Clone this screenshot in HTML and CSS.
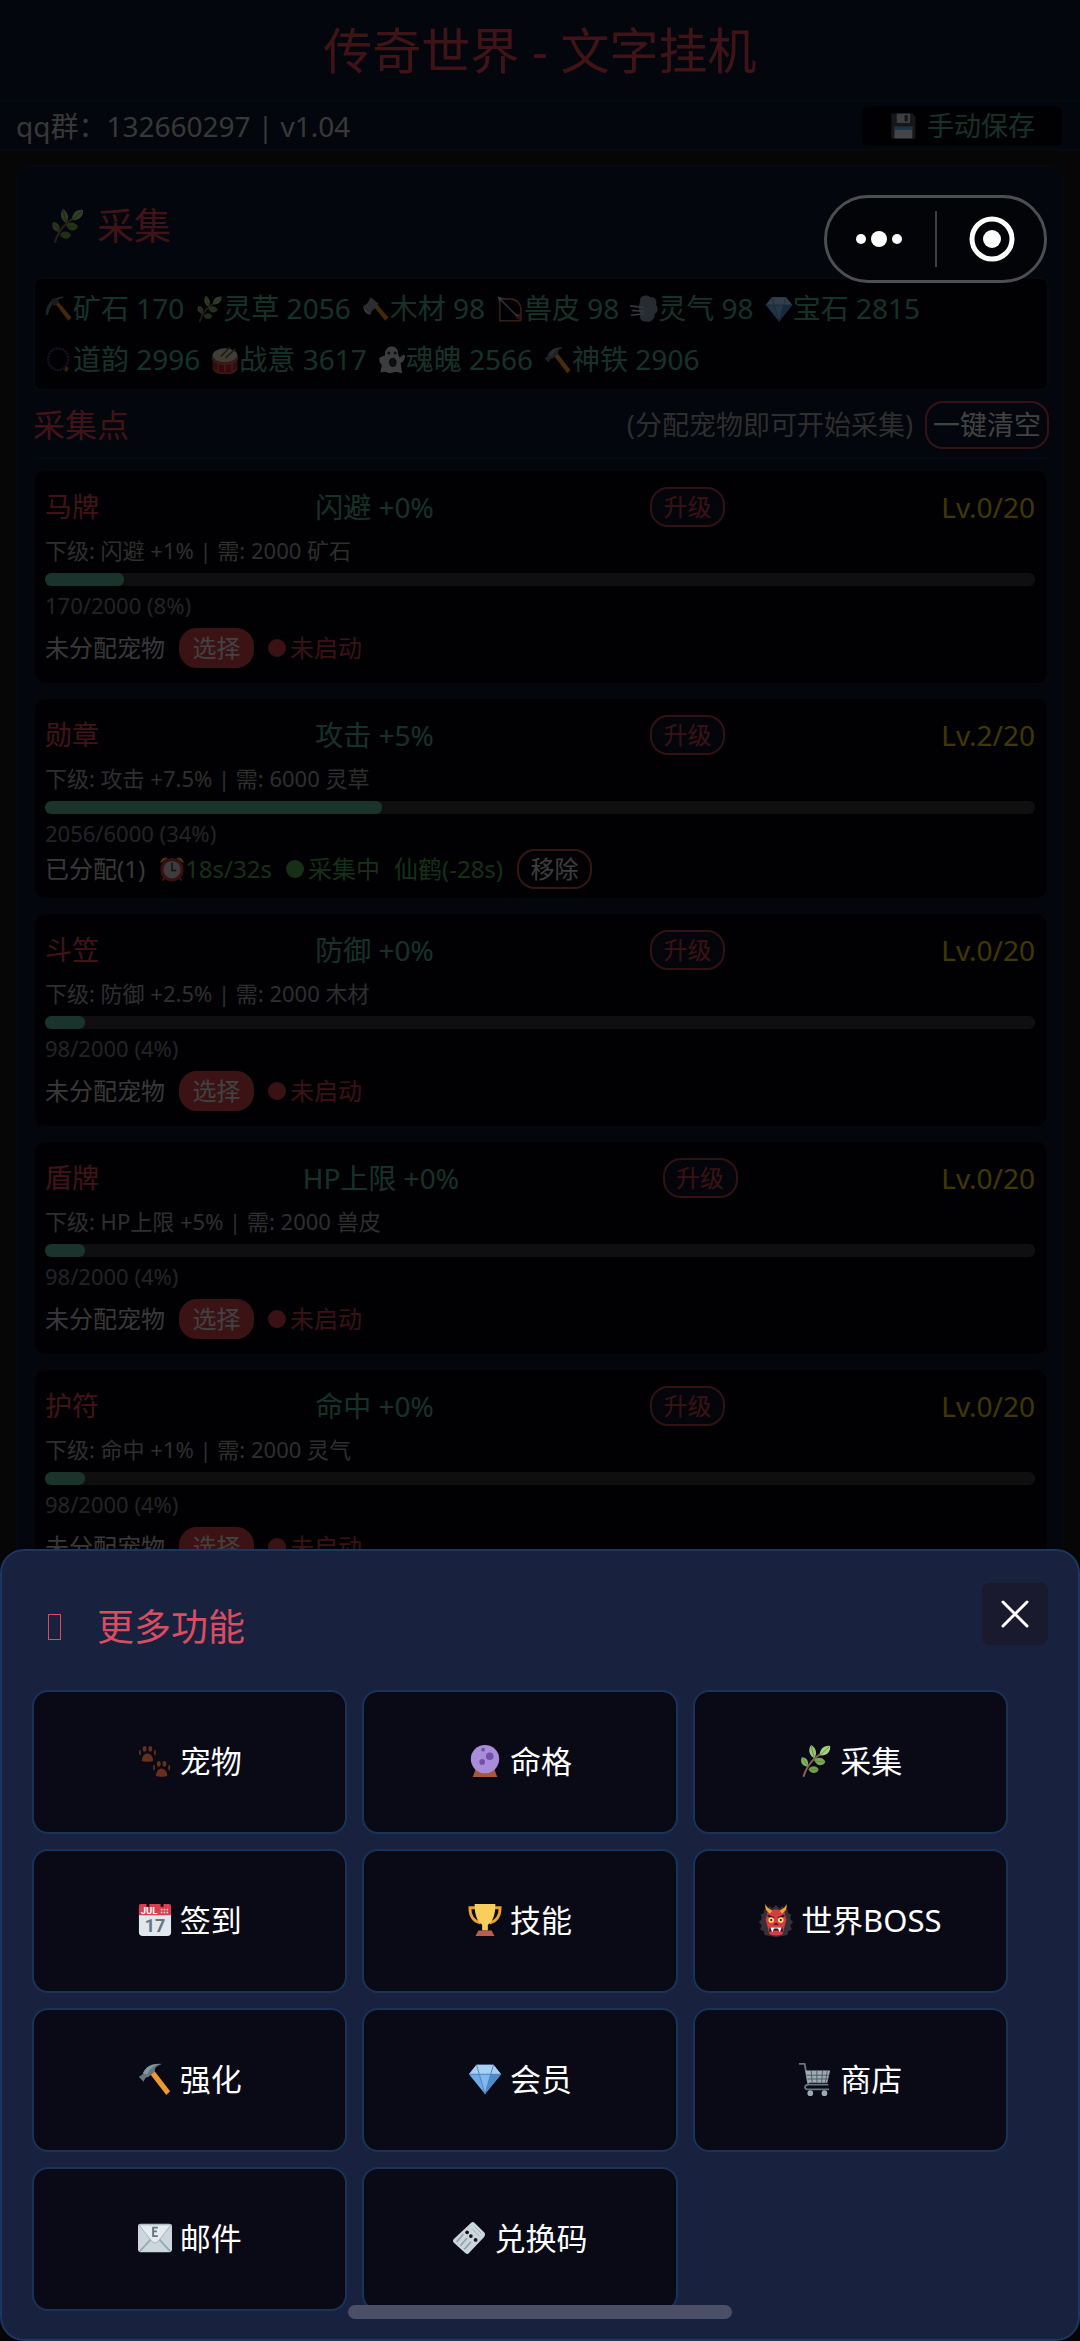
FILE: index.html
```html
<!DOCTYPE html>
<html lang="zh-CN">
<head>
<meta charset="utf-8">
<meta name="viewport" content="width=device-width, initial-scale=1">
<title>传奇世界 - 文字挂机</title>
<link rel="stylesheet" href="styles.css">
</head>
<body>
<svg class="sprite" aria-hidden="true">
  <symbol id="herb" viewBox="0 0 36 36">
    <path d="M6 34C9 24 16 14 30 7" fill="none" stroke="#8a6250" stroke-width="2" stroke-linecap="round"/>
    <path d="M14 1c5 3 7 9 3 14-5-3-7-9-3-14z" fill="#9cc479"/>
    <path d="M34 2c1 6-4 11-11 10C23 5 28 1 34 2z" fill="#a9cf85"/>
    <path d="M4 14c5 0 8 4 6 10-6-1-8-5-6-10z" fill="#83b35f"/>
    <path d="M17 17c4-4 10-3 12 2-3 5-9 5-12-2z" fill="#7aa954"/>
    <path d="M11 27c3-5 9-4 11 0-2 5-8 5-11 0z" fill="#6f9f4b"/>
    <path d="M14 2l3 12M33 3L23 12M5 15l5 8M18 18l10 1M12 27l9 0" stroke="#5c913b" stroke-width="1" fill="none"/>
  </symbol>
  <symbol id="floppy" viewBox="0 0 36 36">
    <path d="M3 2h27l4 4v28H3z" fill="#4a4f57"/>
    <path d="M10 2h17v12H10z" fill="#cfd3d8"/>
    <path d="M20 4h4v8h-4z" fill="#444"/>
    <path d="M7 19h23v15H7z" fill="#e1e8ed"/>
    <path d="M7 19h23v4H7z" fill="#55acee"/>
  </symbol>
  <symbol id="pickaxe" viewBox="0 0 36 36">
    <path d="M11 8l3-3 20 24-4 4z" fill="#e58a1f"/>
    <path d="M1 26C1 12 8 3 24 2l-1 2C14 6 7 12 4 25z" fill="#66757f"/>
    <path d="M9 5l6-1 3 5-6 5-4-3z" fill="#55606a"/>
  </symbol>
  <symbol id="axe" viewBox="0 0 36 36">
    <path d="M12 11l4-3 18 21-4 4z" fill="#e58a1f"/>
    <path d="M2 14C8 12 9 7 11 3l10 8-4 6c-2 1-5 3-6 8C5 24 2 20 2 14z" fill="#8899a6"/>
    <path d="M2 14c0 6 3 10 9 11-5-3-7-6-9-11z" fill="#ccd6dd"/>
  </symbol>
  <symbol id="bow" viewBox="0 0 36 36">
    <path d="M5 5h14c9 1 13 8 13 13v15" fill="none" stroke="#c1694f" stroke-width="2"/>
    <path d="M5 5v28h27" fill="none" stroke="#a0705c" stroke-width="2"/>
    <path d="M3 3l25 25" stroke="#99aab5" stroke-width="2"/>
    <path d="M2 2l7 2-5 5zM24 25h7v7z" fill="#b0bec8"/><path d="M25 29l5-4 3 7z" fill="#dd2e44"/>
  </symbol>
  <symbol id="wind" viewBox="0 0 36 36">
    <path d="M13 9C11 1 22-2 26 3c6-1 10 5 7 9 4 4 3 10-1 12 0 8-7 12-12 10-6 1-9-6-6-9-3-4-3-12-1-16z" fill="#7f93a4"/>
    <path d="M1 14l16 2M3 20l14 1M2 26l15-2" stroke="#aebdca" stroke-width="2" stroke-linecap="round"/>
  </symbol>
  <symbol id="gem" viewBox="0 0 36 36">
    <path d="M9 3h18l8 10-17 21L1 13z" fill="#6fa9e6"/>
    <path d="M9 3h18l8 10H1z" fill="#a7d0f5"/>
    <path d="M12 13h12l-6 21z" fill="#82b8ed"/>
    <path d="M24 13h11L18 34z" fill="#4f8acb"/>
    <path d="M1 13h34M9 3l3 10 6 21 6-21 3-10" fill="none" stroke="#4d83bd" stroke-width="1"/>
  </symbol>
  <symbol id="beads" viewBox="0 0 36 36">
    <ellipse cx="17" cy="17" rx="13" ry="14" fill="none" stroke="#493468" stroke-width="3" stroke-dasharray="3 1"/>
    <path d="M26 26l5 2-3 5-3-1z" fill="#a06b32"/>
  </symbol>
  <symbol id="drum" viewBox="0 0 36 36">
    <path d="M2 13v15c4 9 28 9 32 0V13z" fill="#b92235"/>
    <path d="M9 19v13M18 21v13M27 19v13" stroke="#df5964" stroke-width="2"/>
    <ellipse cx="18" cy="12" rx="16" ry="9" fill="#d3cbc0"/>
    <path d="M1 12c1 12 33 12 34 0v4c-2 11-32 11-34 0zM2 27c5 10 27 10 32 0v3c-5 9-27 9-32 0z" fill="#b5653f"/>
    <path d="M13 13L24 2M19 15L31 4" stroke="#77583b" stroke-width="2" stroke-linecap="round"/>
  </symbol>
  <symbol id="ghost" viewBox="0 0 36 36">
    <path d="M9 12C8-3 27-3 26 11l2 4 5-4 2 2c-1 5-3 8-6 9l2 13-8-2-8 2-6-2-6 1 2-10c-3-2-4-5-3-9z" fill="#c3cad1"/>
    <circle cx="14" cy="9" r="2" fill="#292f33"/><circle cx="22" cy="9" r="2" fill="#292f33"/>
    <ellipse cx="19" cy="21" rx="5" ry="6" fill="#292f33"/>
  </symbol>
  <symbol id="hammer" viewBox="0 0 36 36">
    <path d="M13 13l4-4 17 22-4 4z" fill="#f0982c"/>
    <path d="M1 16c1-2 4-2 5-5 3-7 9-10 19-9-5 2-8 4-7 8l-7 6c-3 0-4 2-5 5z" fill="#66757f"/>
    <path d="M5 12c3-7 9-10 20-10-8 1-12 4-15 11z" fill="#8997a1"/>
  </symbol>
  <symbol id="clock" viewBox="0 0 36 36">
    <path d="M2 10c0-6 5-9 10-7zM34 10c0-6-5-9-10-7z" fill="#f6b64a"/>
    <path d="M8 29l-3 5M28 29l3 5" stroke="#d23b3e" stroke-width="3"/>
    <circle cx="18" cy="19" r="14" fill="#c8c8c8" stroke="#c8383a" stroke-width="4"/>
    <path d="M18 9v11h6" fill="none" stroke="#30363b" stroke-width="2"/>
  </symbol>
  <symbol id="paws" viewBox="0 0 36 36">
    <g id="paw" fill="#66301c">
      <path d="M4 18c0-5 3-8 6-8s6 3 6 8c-2 1-10 1-12 0z"/>
      <ellipse cx="2" cy="9" rx="1" ry="3"/><ellipse cx="7" cy="5" rx="2" ry="3"/><ellipse cx="13" cy="5" rx="2" ry="3"/><ellipse cx="18" cy="9" rx="1" ry="3"/>
    </g>
    <use href="#paw" x="15" y="16"/>
  </symbol>
  <symbol id="crystal" viewBox="0 0 36 36">
    <path d="M8 27h20l3 8H5z" fill="#a9563f"/>
    <circle cx="18" cy="16" r="15" fill="#aa8dd8"/>
    <circle cx="23" cy="13" r="4" fill="#7450a8"/><circle cx="15" cy="19" r="3" fill="#7450a8"/><circle cx="16" cy="6" r="2" fill="#7450a8"/>
  </symbol>
  <symbol id="trophy" viewBox="0 0 36 36">
    <path d="M9 5H2c0 9 3 14 11 16M27 5h7c0 9-3 14-11 16" fill="none" stroke="#eaa32f" stroke-width="3"/>
    <path d="M7 1h22c0 12-3 19-8 22v6h-6v-6C10 20 7 13 7 1z" fill="#fbcd5a"/>
    <path d="M11 29h14l3 6H8z" fill="#b5614d"/>
  </symbol>
  <symbol id="ogre" viewBox="0 0 36 36">
    <path d="M6 6l3 1 2-4 3 3 4-4 4 4 3-3 2 4 3-1 1 5 3 1-1 5 3 3-3 4 2 4-4 2-1 4-12 2-12-2-1-4-4-2 2-4-3-4 3-3-1-5 3-1z" fill="#373038"/>
    <path d="M9 10c5-4 13-4 18 0l2 8-2 7-2 8q-7 3-14 0l-2-8-2-7z" fill="#d63c43"/>
    <path d="M12 11C7 9 6 4 7 1c1 4 4 5 7 7zM24 11c5-2 6-7 5-10-1 4-4 5-7 7z" fill="#f3a62c"/>
    <path d="M9 13l7 3M27 13l-7 3" stroke="#30181c" stroke-width="2"/>
    <circle cx="13" cy="18" r="3" fill="#ffd66a"/><circle cx="23" cy="18" r="3" fill="#ffd66a"/><circle cx="13" cy="18" r="1"/><circle cx="23" cy="18" r="1"/>
    <path d="M15 23l3-2 3 2M11 26h14v5l-3-2h-8l-3 2z" fill="#2d1518"/><path d="M12 26l2 5 2-4h4l2 4 2-5z" fill="#fff"/>
  </symbol>
  <symbol id="cart" viewBox="0 0 36 36">
    <path d="M1 2h6l4 22h21M11 24c-4 0-5 5-1 5h23" fill="none" stroke="#66757f" stroke-width="2"/>
    <path d="M8 9h26l-3 13H10z" fill="#9eabb5"/>
    <path d="M9 14h24M10 18h22M14 9l1 13M20 9v13M26 9l-1 13M31 9l-2 13" stroke="#4e5963" stroke-width="1"/>
    <circle cx="13" cy="33" r="3" fill="#9baab5"/><circle cx="28" cy="33" r="3" fill="#9baab5"/>
  </symbol>
  <symbol id="mail" viewBox="0 0 36 36">
    <rect x="0" y="3" width="36" height="30" rx="3" fill="#ccd6dd"/>
    <path d="M2 32l12-13M34 32L22 19" stroke="#99aab5" stroke-width="2"/>
    <path d="M1 4h34L21 22q-3 3-6 0z" fill="#e5ebef" stroke="#a5b3bd" stroke-width="1"/>
    <path d="M21 7h-5v9h5M16 11h4" fill="none" stroke="#66757f" stroke-width="2"/>
  </symbol>
  <symbol id="ticket" viewBox="0 0 36 36">
    <path d="M20 2q2-2 4 0l10 10q2 2 0 5L18 34q-2 2-4 0L2 23q-2-2 0-4z" fill="#ccd6dd"/>
    <path d="M5 22l7-8M9 26l7-8M13 30l7-8" stroke="#97a6b1" stroke-width="2"/>
    <path d="M21 8l8 8M24 6l7 7" stroke="#a5b3bd" stroke-width="1"/>
    <g fill="#15151f"><circle cx="16" cy="12" r="2"/><circle cx="20" cy="16" r="2"/><circle cx="25" cy="20" r="2"/></g>
  </symbol>
</svg>

<div class="page">
  <header class="topbar"><h1>传奇世界 - 文字挂机</h1></header>
  <div class="infobar">
    <span>qq群：132660297 | v1.04</span>
    <button class="save" type="button"><svg class="emoji"><use href="#floppy"/></svg>手动保存</button>
  </div>

  <main class="panel">
    <h2 class="panel-title"><svg class="emoji"><use href="#herb"/></svg>采集</h2>

    <ul class="resources">
      <li><svg class="emoji"><use href="#pickaxe"/></svg>矿石 170</li>
      <li><svg class="emoji"><use href="#herb"/></svg>灵草 2056</li>
      <li><svg class="emoji"><use href="#axe"/></svg>木材 98</li>
      <li><svg class="emoji"><use href="#bow"/></svg>兽皮 98</li>
      <li><svg class="emoji"><use href="#wind"/></svg>灵气 98</li>
      <li><svg class="emoji"><use href="#gem"/></svg>宝石 2815</li>
      <li><svg class="emoji"><use href="#beads"/></svg>道韵 2996</li>
      <li><svg class="emoji"><use href="#drum"/></svg>战意 3617</li>
      <li><svg class="emoji"><use href="#ghost"/></svg>魂魄 2566</li>
      <li><svg class="emoji"><use href="#hammer"/></svg>神铁 2906</li>
    </ul>

    <div class="section-head">
      <h3>采集点</h3>
      <span class="hint">(分配宠物即可开始采集)</span>
      <button class="clear" type="button">一键清空</button>
    </div>

    <article class="card">
      <div class="card-head"><span class="name">马牌</span><span class="bonus">闪避 +0%</span><button class="pill outline" type="button">升级</button><span class="level">Lv.0/20</span></div>
      <p class="next">下级: 闪避 +1% | 需: 2000 矿石</p>
      <div class="track"><div class="fill" style="width:8%"></div></div>
      <p class="amount">170/2000 (8%)</p>
      <div class="actions"><span>未分配宠物</span><button class="pill solid" type="button">选择</button><span class="status off">未启动</span></div>
    </article>

    <article class="card assigned">
      <div class="card-head"><span class="name">勋章</span><span class="bonus">攻击 +5%</span><button class="pill outline" type="button">升级</button><span class="level">Lv.2/20</span></div>
      <p class="next">下级: 攻击 +7.5% | 需: 6000 灵草</p>
      <div class="track"><div class="fill" style="width:34%"></div></div>
      <p class="amount">2056/6000 (34%)</p>
      <div class="actions"><span>已分配(1)</span><span class="timer"><svg class="emoji"><use href="#clock"/></svg>18s/32s</span><span class="status on">采集中</span><span class="pet">仙鹤(-28s)</span><button class="pill remove" type="button">移除</button></div>
    </article>

    <article class="card">
      <div class="card-head"><span class="name">斗笠</span><span class="bonus">防御 +0%</span><button class="pill outline" type="button">升级</button><span class="level">Lv.0/20</span></div>
      <p class="next">下级: 防御 +2.5% | 需: 2000 木材</p>
      <div class="track"><div class="fill" style="width:4%"></div></div>
      <p class="amount">98/2000 (4%)</p>
      <div class="actions"><span>未分配宠物</span><button class="pill solid" type="button">选择</button><span class="status off">未启动</span></div>
    </article>

    <article class="card">
      <div class="card-head"><span class="name">盾牌</span><span class="bonus">HP上限 +0%</span><button class="pill outline" type="button">升级</button><span class="level">Lv.0/20</span></div>
      <p class="next">下级: HP上限 +5% | 需: 2000 兽皮</p>
      <div class="track"><div class="fill" style="width:4%"></div></div>
      <p class="amount">98/2000 (4%)</p>
      <div class="actions"><span>未分配宠物</span><button class="pill solid" type="button">选择</button><span class="status off">未启动</span></div>
    </article>

    <article class="card">
      <div class="card-head"><span class="name">护符</span><span class="bonus">命中 +0%</span><button class="pill outline" type="button">升级</button><span class="level">Lv.0/20</span></div>
      <p class="next">下级: 命中 +1% | 需: 2000 灵气</p>
      <div class="track"><div class="fill" style="width:4%"></div></div>
      <p class="amount">98/2000 (4%)</p>
      <div class="actions"><span>未分配宠物</span><button class="pill solid" type="button">选择</button><span class="status off">未启动</span></div>
    </article>
  </main>
</div>

<div class="scrim"></div>

<div class="capsule">
  <button type="button" aria-label="更多">
    <svg width="48" height="48" viewBox="0 0 48 48" fill="#fff"><circle cx="6" cy="24" r="5"/><circle cx="24" cy="24" r="8"/><circle cx="42" cy="24" r="5"/></svg>
  </button>
  <button type="button" aria-label="关闭小程序">
    <svg width="48" height="48" viewBox="0 0 48 48"><circle cx="24" cy="24" r="20" fill="none" stroke="#fff" stroke-width="5"/><circle cx="24" cy="24" r="9" fill="#fff"/></svg>
  </button>
</div>

<section class="sheet" role="dialog" aria-labelledby="more-title">
  <div class="sheet-head">
    <h2 id="more-title"><span class="missing"></span>更多功能</h2>
    <button class="close" type="button" aria-label="关闭"><svg width="28" height="28" viewBox="0 0 28 28"><path d="M2 2l24 24M26 2L2 26" stroke="#fff" stroke-width="3" stroke-linecap="round"/></svg></button>
  </div>
  <div class="menu">
    <button type="button"><svg class="emoji"><use href="#paws"/></svg>宠物</button>
    <button type="button"><svg class="emoji"><use href="#crystal"/></svg>命格</button>
    <button type="button"><svg class="emoji"><use href="#herb"/></svg>采集</button>
    <button type="button">
      <svg class="emoji" viewBox="0 0 36 36">
        <path d="M1 5h34v26q0 4-4 4H5q-4 0-4-4z" fill="#e1e8ed"/>
        <path d="M1 13V3q0-2 2-2h6v3h3V1h12v3h3V1h6q2 0 2 2v10z" fill="#d83f50"/>
        <g fill="#fff" opacity=".7"><circle cx="25" cy="7" r="1"/><circle cx="28" cy="7" r="1"/><circle cx="31" cy="7" r="1"/><circle cx="25" cy="10" r="1"/><circle cx="28" cy="10" r="1"/><circle cx="31" cy="10" r="1"/></g>
        <text x="3" y="12" class="cal-month">JUL</text>
        <text x="18" y="31" text-anchor="middle" class="cal-day">17</text>
      </svg>签到</button>
    <button type="button"><svg class="emoji"><use href="#trophy"/></svg>技能</button>
    <button type="button"><svg class="emoji"><use href="#ogre"/></svg>世界BOSS</button>
    <button type="button"><svg class="emoji"><use href="#hammer"/></svg>强化</button>
    <button type="button"><svg class="emoji"><use href="#gem"/></svg>会员</button>
    <button type="button"><svg class="emoji"><use href="#cart"/></svg>商店</button>
    <button type="button"><svg class="emoji"><use href="#mail"/></svg>邮件</button>
    <button type="button"><svg class="emoji"><use href="#ticket"/></svg>兑换码</button>
  </div>
</section>
<div class="home-indicator"></div>
</body>
</html>
```
FILE: styles.css
```css
:root {
  --red: #d8434f;
  --green: #4ca686;
  --line: #0e2036;
  --panel: #0a1528;
  --card: #06060f;
}

* { box-sizing: border-box; }

body {
  margin: 0;
  overflow: hidden;
  background: #000;
  font-family: "Noto Sans", "Noto Sans CJK SC", sans-serif;
  font-size: 28px;
  line-height: 40px;
}

h1, h2, h3, p, ul { margin: 0; padding: 0; font-weight: 400; }
ul { list-style: none; }

button {
  margin: 0;
  padding: 0;
  border: 0;
  background: none;
  color: inherit;
  font: inherit;
}

.sprite { position: absolute; width: 0; height: 0; }
.emoji { flex: none; width: 28px; height: 28px; }
.cal-month { font: 700 10px "Roboto", sans-serif; fill: #fff; }
.cal-day { font: 700 19px "Roboto", sans-serif; fill: #66757f; }

/* Game page */
.page { height: 100vh; overflow: hidden; background: #14141a; }

.topbar {
  padding: 20px;
  border-bottom: 2px solid var(--line);
  background: var(--panel);
  color: var(--red);
  text-align: center;
}
.topbar h1 { font-size: 49px; line-height: 60px; }

.infobar {
  display: flex;
  align-items: center;
  justify-content: space-between;
  padding: 4px 18px 3px 16px;
  border-bottom: 2px solid var(--line);
  background: var(--panel);
  color: #bbb;
}
.save {
  display: flex;
  align-items: center;
  justify-content: center;
  gap: 10px;
  width: 200px;
  height: 40px;
  border-radius: 6px;
  background: var(--card);
  color: var(--green);
  font-size: 27px;
}

.panel {
  margin: 14px 16px;
  padding: 16px 13px 16px 15px;
  border: 2px solid var(--line);
  border-radius: 18px;
  background: var(--panel);
}
.panel-title {
  display: flex;
  align-items: center;
  gap: 12px;
  padding: 16px 16px 24px;
  color: var(--red);
  font-size: 37px;
  line-height: 54px;
}
.panel-title .emoji { width: 36px; height: 36px; }

.resources {
  display: flex;
  flex-wrap: wrap;
  column-gap: 11px;
  padding: 4px 10px;
  border: 2px solid var(--line);
  border-radius: 8px;
  background: var(--card);
  color: var(--green);
  line-height: 51px;
}
.resources li { display: flex; align-items: center; }

.section-head {
  display: flex;
  align-items: center;
  gap: 12px;
  margin: 10px 0;
  padding-bottom: 8px;
  border-bottom: 2px solid var(--line);
}
.section-head h3 { flex: 1; color: var(--red); font-size: 32px; }
.hint { color: #999; font-size: 27px; }
.clear {
  width: 124px;
  height: 48px;
  border: 2px solid #b83c46;
  border-radius: 18px;
  color: #ddd;
  font-size: 27px;
}

.card {
  margin-bottom: 12px;
  padding: 16px 12px 15px 10px;
  border: 2px solid #0b1524;
  border-radius: 12px;
  background: var(--card);
}
.card.assigned { padding-bottom: 9px; }
.card-head { display: flex; align-items: center; justify-content: space-between; height: 40px; }
.name { color: var(--red); font-size: 27px; }
.bonus { color: var(--green); }
.level { color: #d9b80c; }
.next { margin: 7px 0; color: #999; font-size: 22px; line-height: 32px; }
.track { height: 13px; border-radius: 6px; background: #333; overflow: hidden; }
.fill { height: 100%; border-radius: 6px; background: #5bb091; }
.amount { margin-top: 4px; color: #777; font-size: 22px; line-height: 30px; }

.actions {
  display: flex;
  align-items: center;
  gap: 14px;
  margin-top: 8px;
  color: #bbb;
  font-size: 24px;
}
.assigned .actions { margin-top: 1px; }

.pill {
  width: 75px;
  height: 40px;
  border-radius: 18px;
  font-size: 24px;
  line-height: 36px;
}
.outline { border: 2px solid #a03a44; background: #0a1222; color: #c43e4a; }
.solid { background: #c84048; color: #ddd; }
.remove { border: 2px solid #b04a40; color: #ccc; }

.status { display: flex; align-items: center; gap: 4px; }
.status::before { content: ""; width: 18px; height: 18px; border-radius: 50%; background: currentColor; }
.off { color: #c23c48; }
.on, .timer, .pet { color: #48a04c; }
.timer { display: flex; align-items: center; }
.timer .emoji { width: 26px; height: 26px; }

/* Layers above the page */
.scrim { position: fixed; inset: 0; background: rgba(0, 0, 0, .7); }

.capsule {
  position: fixed;
  top: 195px;
  right: 33px;
  display: flex;
  align-items: center;
  width: 223px;
  height: 88px;
  border: 3px solid #4c4e52;
  border-radius: 44px;
  background: #030407;
}
.capsule button { display: flex; flex: 1; align-items: center; justify-content: center; height: 56px; padding-right: 4px; }
.capsule button + button { padding: 0 0 0 4px; border-left: 2px solid #3c3e42; }

.sheet {
  position: fixed;
  right: 0;
  bottom: 0;
  left: 0;
  padding: 32px 30px 28px;
  border: 2px solid #1b365f;
  border-radius: 24px;
  background: #18213d;
}
.sheet-head { display: flex; align-items: flex-start; justify-content: space-between; }
.sheet-head h2 {
  display: flex;
  align-items: center;
  gap: 36px;
  margin: 18px 0 37px;
  padding-left: 16px;
  color: #d94d63;
  font-size: 37px;
  line-height: 52px;
}
.missing { width: 13px; height: 26px; border: 1px solid currentColor; }
.close {
  display: flex;
  align-items: center;
  justify-content: center;
  width: 66px;
  height: 62px;
  border-radius: 8px;
  background: #1a1a2e;
}
.menu {
  display: grid;
  grid-template-columns: repeat(3, 1fr);
  gap: 15px;
  padding-right: 40px;
}
.menu button {
  display: flex;
  align-items: center;
  justify-content: center;
  gap: 8px;
  height: 144px;
  padding-bottom: 2px;
  border: 2px solid #1a3358;
  border-radius: 16px;
  background: #0a0a16;
  color: #fff;
  font-size: 31px;
}
.menu .emoji { width: 34px; height: 34px; }

.home-indicator {
  position: fixed;
  bottom: 22px;
  left: 50%;
  width: 384px;
  height: 14px;
  margin-left: -192px;
  border-radius: 7px;
  background: #4a4e66;
}
```
